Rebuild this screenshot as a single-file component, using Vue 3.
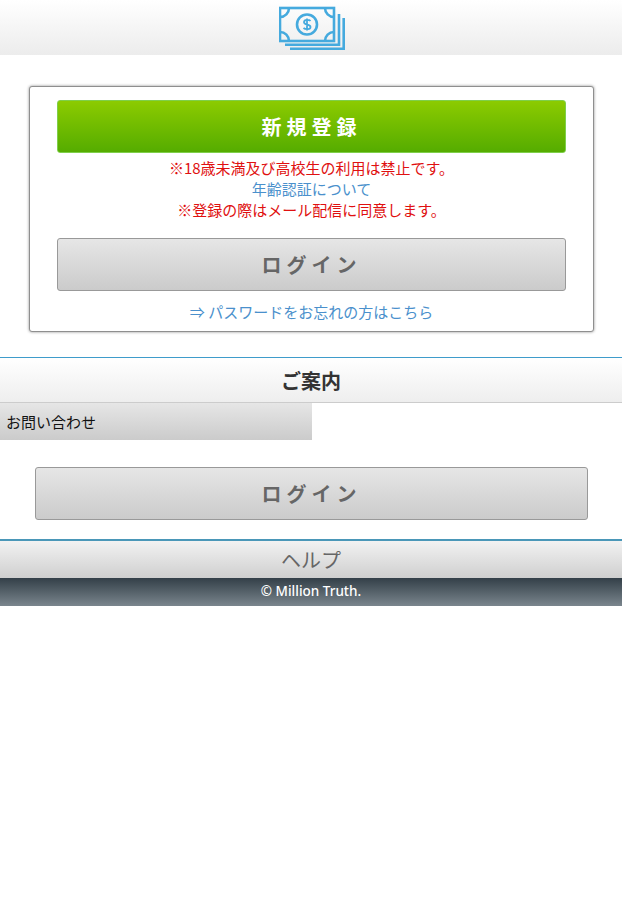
<template>
  <div class="page">
    <header class="top">
      <svg class="logo" width="66" height="52" viewBox="0 0 66 52" fill="none" stroke="#45aade" stroke-width="2.6">
        <rect x="1" y="8" width="54" height="33" />
        <path d="M1 17 A9 9 0 0 0 10 8 M46 8 A9 9 0 0 0 55 17 M1 32 A9 9 0 0 1 10 41 M46 41 A9 9 0 0 1 55 32" />
        <circle cx="28" cy="24.5" r="10" />
        <path d="M31.5 21 C30 19.3 25 19.5 25 22.3 C25 25.5 31.5 24 31.5 27 C31.5 29.7 26.5 29.8 24.5 28 M28 18.5 V30.5" stroke-width="1.8" />
        <path d="M6 44.7 H60 V14 M11 48.7 H64.7 V18" />
      </svg>
    </header>

    <section class="box">
      <button class="btn green">新規登録</button>
      <div class="notes">
        <p class="red">※18歳未満及び高校生の利用は禁止です。</p>
        <p class="blue">年齢認証について</p>
        <p class="red">※登録の際はメール配信に同意します。</p>
      </div>
      <button class="btn gray login-a">ログイン</button>
      <p class="blue forgot">⇒ パスワードをお忘れの方はこちら</p>
    </section>

    <h2 class="guide">ご案内</h2>
    <div class="menu"><div class="menu-item">お問い合わせ</div></div>
    <div class="login-wrap"><button class="btn gray">ログイン</button></div>
    <div class="help">ヘルプ</div>
    <footer class="foot">© Million Truth.</footer>
  </div>
</template>

<script setup>
</script>

<style>
html, body { margin: 0; background: #fff; }
</style>

<style scoped>
.page {
  font-family: "Noto Sans CJK JP", "Noto Sans", sans-serif;
  font-size: 15px;
  color: #333;
  width: 622px;
}
p { margin: 0; }
.top {
  height: 55px;
  background: linear-gradient(#fff, #ececec);
  display: flex;
  justify-content: center;
  align-items: flex-start;
}
.logo { display: block; margin-left: 1px; }
.box {
  margin: 31px 28px 0 29px;
  height: 246px;
  box-sizing: border-box;
  border: 1px solid #8f8f8f;
  border-radius: 3px;
  box-shadow: 0 0 3px rgba(0,0,0,.45);
  padding: 13px 27px 0;
  background: #fff;
}
.btn {
  display: block;
  width: 100%;
  height: 53px;
  box-sizing: border-box;
  border-radius: 3px;
  font-family: inherit;
  font-size: 20px;
  font-weight: 700;
  letter-spacing: 5px;
  padding: 0;
}
.green {
  color: #fff;
  background: linear-gradient(#8ccb00, #55ac00);
  border: 1px solid #7fcf4a;
}
.gray {
  color: #666;
  background: linear-gradient(#e6e6e6, #cbcbcb);
  border: 1px solid #999;
}
.notes {
  margin-top: 4px;
  text-align: center;
  line-height: 21px;
  font-size: 15px;
}
.red { color: #e01010; }
.blue { color: #4a90cc; }
.login-a { margin-top: 18px; }
.forgot {
  text-align: center;
  margin-top: 10px;
  line-height: 22px;
  font-size: 15px;
}
.guide {
  margin: 25px 0 0;
  height: 46px;
  box-sizing: border-box;
  border-top: 1px solid #3f9ccb;
  border-bottom: 1px solid #ccc;
  background: linear-gradient(#fff, #eee);
  text-align: center;
  font-size: 20px;
  font-weight: 700;
  line-height: 45px;
  color: #333;
}
.menu { height: 37px; }
.menu-item {
  width: 312px;
  height: 37px;
  line-height: 37px;
  padding-left: 6px;
  box-sizing: border-box;
  background: linear-gradient(#e6e6e6, #cbcbcb);
  color: #111;
  font-size: 15px;
}
.login-wrap { padding: 27px 34px 19px 35px; }
.help {
  height: 39px;
  box-sizing: border-box;
  border-top: 2px solid #4a97b8;
  background: linear-gradient(#f2f2f2, #cfcfcf);
  text-align: center;
  font-size: 20px;
  line-height: 38px;
  color: #666;
}
.foot {
  height: 28px;
  background: linear-gradient(#333f48, #7a858d);
  color: #fff;
  text-align: center;
  font-size: 13.5px;
  font-weight: 500;
  line-height: 27px;
  font-family: "Noto Sans", sans-serif;
}
</style>
